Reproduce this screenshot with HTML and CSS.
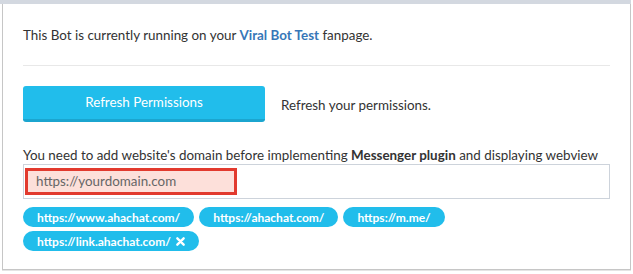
FILE: index.html
```html
<!DOCTYPE html>
<html>
<head>
<meta charset="utf-8">
<link rel="stylesheet" href="styles.css">
</head>
<body>
<div class="topbar"></div>
<div class="panel">
  <p class="intro">This Bot is currently running on your <a class="page-link">Viral Bot Test</a> fanpage.</p>
  <hr class="divider">
  <div class="refresh-row">
    <button class="btn-refresh">Refresh Permissions</button>
    <span class="refresh-note">Refresh your permissions.</span>
  </div>
  <p class="domain-label">You need to add website's domain before implementing <b>Messenger plugin</b> and displaying webview</p>
  <div class="domain-input">
    <div class="domain-field">https://yourdomain.com</div>
  </div>
  <div class="tags">
    <span class="tag">https://www.ahachat.com/</span>
    <span class="tag">https://ahachat.com/</span>
    <span class="tag">https://m.me/</span>
    <span class="tag">https://link.ahachat.com/
      <svg class="tag-x" viewBox="0 0 10 10" width="9" height="9"><path d="M1.5 1.5 L8.5 8.5 M8.5 1.5 L1.5 8.5" stroke="#fff" stroke-width="2.6" stroke-linecap="round"/></svg>
    </span>
  </div>
</div>
</body>
</html>
```
FILE: styles.css
```css
html, body {
  margin: 0;
  padding: 0;
  background: #fff;
}
body {
  font-family: "Lato", "Liberation Sans", sans-serif;
  font-size: 13.4px;
  color: #333;
  width: 633px;
  height: 274px;
  overflow: hidden;
}
.topbar {
  height: 4px;
  background: #d3d8e0;
  width: 631px;
}
.panel {
  margin-left: 2px;
  width: 629px;
  height: 266px;
  border: 1px solid #c6c6c6;
  border-top: none;
  box-shadow: 0 1px 0 #e4e4e4;
  padding: 0 20px;
  box-sizing: border-box;
}
.intro {
  margin: 0;
  padding-top: 21px;
  line-height: 20px;
}
.page-link {
  color: #3777b8;
  font-weight: bold;
}
.divider {
  border: none;
  border-top: 1px solid #e8e8e8;
  margin: 20px 0 0 0;
  height: 0;
}
.refresh-row {
  display: flex;
  align-items: center;
  margin-top: 20px;
}
.btn-refresh {
  width: 242px;
  height: 36px;
  background: #21bdeb;
  border: none;
  border-bottom: 3px solid #1ba5cf;
  border-radius: 3px;
  color: #fff;
  font-family: inherit;
  font-size: 13.4px;
  padding: 0 0 1px 0;
}
.refresh-note {
  margin-left: 16px;
  margin-top: 1px;
}
.domain-label {
  margin: 23px 0 0 0;
  line-height: 20px;
  white-space: nowrap;
}
.domain-input {
  margin-top: -1px;
  height: 35px;
  border: 1px solid #cdd3db;
  box-sizing: border-box;
  padding: 3px 0 0 1px;
}
.domain-field {
  width: 212px;
  height: 27px;
  box-sizing: border-box;
  border: 3px solid #e23a2e;
  background: #fde0da;
  color: #666;
  line-height: 21px;
  padding-left: 8px;
}
.tags {
  display: flex;
  flex-wrap: wrap;
  gap: 4px 5px;
  margin-top: 8px;
  width: 440px;
}
.tag {
  display: inline-flex;
  align-items: center;
  height: 20px;
  border-radius: 10px;
  background: #21bdeb;
  color: #fff;
  font-weight: bold;
  font-size: 12px;
  padding: 0 14px;
  white-space: nowrap;
}
.tag-x {
  margin-left: 5px;
}
```
